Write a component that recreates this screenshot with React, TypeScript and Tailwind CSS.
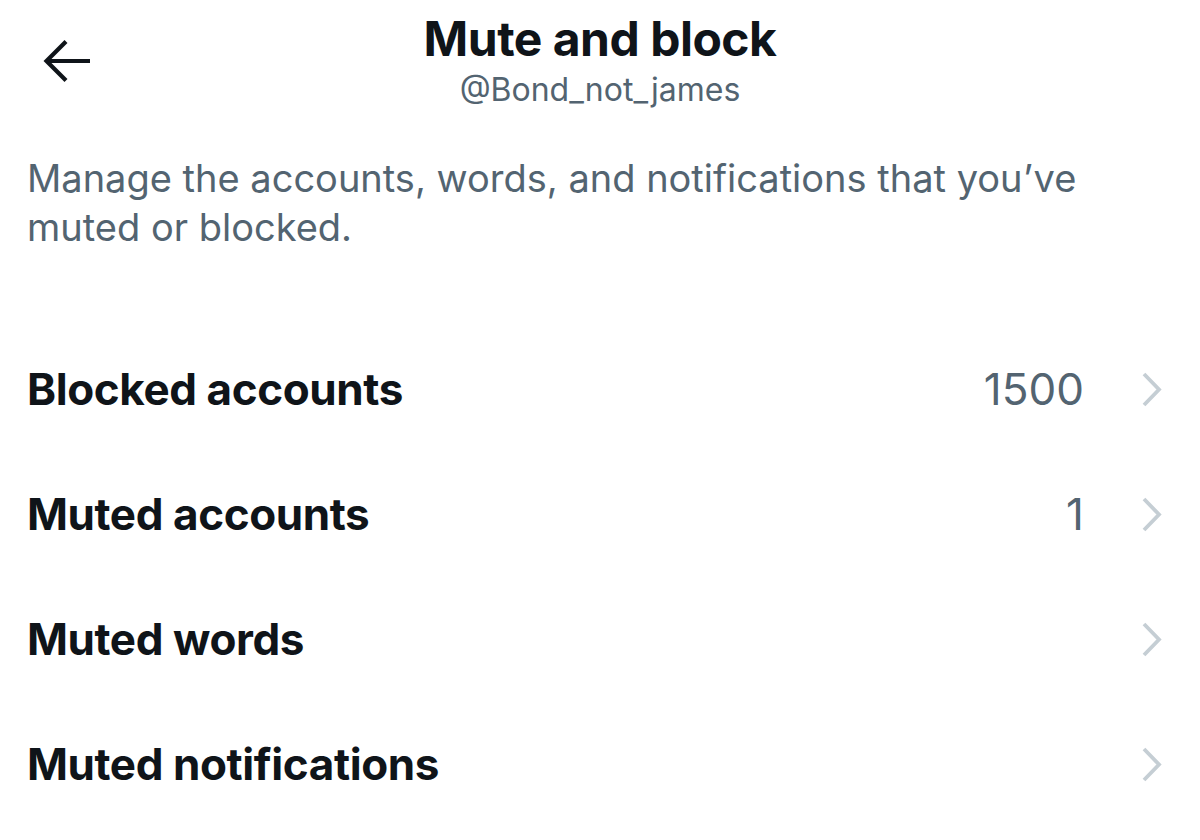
import React from "react";

function Chevron() {
  return (
    <svg width="22" height="38" viewBox="0 0 22 38" fill="none">
      <polyline points="4,4 19,19.5 4,35" stroke="#C5CED4" strokeWidth="3.8" strokeLinecap="butt" strokeLinejoin="miter" />
    </svg>
  );
}

function Row({ label, count }: { label: string; count?: string }) {
  return (
    <div className="flex items-center h-[125px] pl-[27px] pr-[38px]">
      <div className="flex-1 text-[44px] font-bold text-[#0f1419] tracking-[-0.4px]">{label}</div>
      {count && <div className="text-[44px] text-[#536471] mr-[56px]">{count}</div>}
      <Chevron />
    </div>
  );
}

export default function App() {
  return (
    <div className="w-[1200px] h-[840px] bg-white overflow-hidden" style={{ fontFamily: "Inter, 'Noto Sans', sans-serif" }}>
      <div className="relative flex flex-col items-center pt-[11px]">
        <div className="absolute left-[40px] top-[37px]">
          <svg width="54" height="48" viewBox="0 0 54 48" fill="none">
            <path d="M50 24 H8" stroke="#0f1419" strokeWidth="4.2" />
            <path d="M26 4.5 L6.5 24 L26 43.5" stroke="#0f1419" strokeWidth="4.2" fill="none" />
          </svg>
        </div>
        <div className="text-[48px] leading-[56px] font-bold text-[#0f1419] tracking-[-0.5px]">Mute and block</div>
        <div className="mt-[7px] text-[32px] leading-[32px] text-[#536471]">@Bond_not_james</div>
      </div>
      <div className="pl-[27px] pt-[48px] max-w-[1120px] text-[38px] leading-[49px] text-[#536471]">
        Manage the accounts, words, and notifications that you’ve muted or blocked.
      </div>
      <div className="pt-[74px]">
        <Row label="Blocked accounts" count="1500" />
        <Row label="Muted accounts" count="1" />
        <Row label="Muted words" />
        <Row label="Muted notifications" />
      </div>
    </div>
  );
}
